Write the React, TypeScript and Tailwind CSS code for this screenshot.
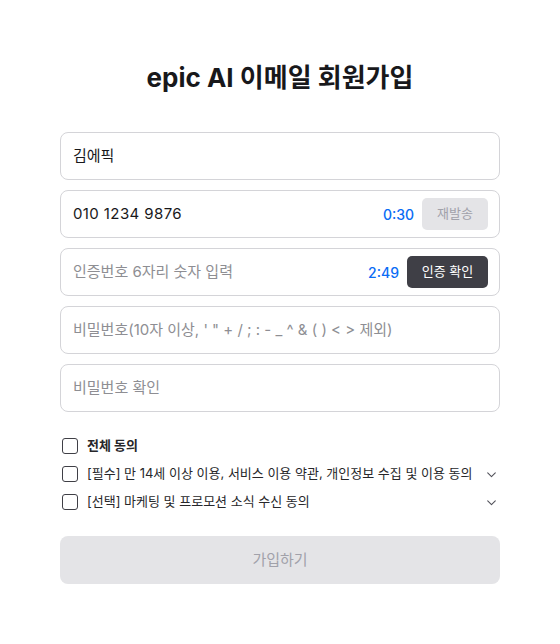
import React, { useState } from 'react';

const font = { fontFamily: 'Inter, "Noto Sans CJK KR", sans-serif' };

const Chevron = () => (
  <svg width="13" height="13" viewBox="0 0 24 24" fill="none" stroke="#52525b" strokeWidth="2" strokeLinecap="round" strokeLinejoin="round">
    <path d="M5 9l7 7 7-7" />
  </svg>
);

interface AgreeRowProps {
  label: string;
  bold?: boolean;
  expandable?: boolean;
}

const AgreeRow: React.FC<AgreeRowProps> = ({ label, bold, expandable }) => {
  const [checked, setChecked] = useState(false);
  return (
    <div className="flex h-7 items-center">
      <button
        type="button"
        onClick={() => setChecked(!checked)}
        className="ml-[2px] h-4 w-4 rounded-[3px] border-[1.5px] border-[#3f3f46] bg-white"
      />
      <span className={`ml-[9px] flex-1 text-[13px] text-[#27272a] ${bold ? 'font-bold' : ''}`}>{label}</span>
      {expandable && (
        <span className="mr-[2px] flex items-center">
          <Chevron />
        </span>
      )}
    </div>
  );
};

export default function App() {
  const [name, setName] = useState('김에픽');
  const [phone, setPhone] = useState('010 1234 9876');
  const [code, setCode] = useState('');
  const [pw, setPw] = useState('');
  const [pw2, setPw2] = useState('');

  const inputBox = 'flex h-12 items-center rounded-lg border border-[#d4d4d8] bg-white pl-3 pr-[11px]';
  const inputCls = 'min-w-0 flex-1 bg-transparent text-[15px] text-[#18181b] outline-none placeholder:text-[#8e8e93]';

  return (
    <div className="min-h-[644px] w-full bg-white" style={font}>
      <div className="mx-auto flex w-[440px] flex-col pt-[59px]">
        <h1 className="text-center text-[26px] font-bold leading-[38px] text-[#18181b]">epic AI 이메일 회원가입</h1>

        <form className="mt-[35px] flex flex-col gap-[10px]" onSubmit={(e) => e.preventDefault()}>
          <div className={inputBox}>
            <input className={inputCls} value={name} onChange={(e) => setName(e.target.value)} />
          </div>
          <div className={inputBox}>
            <input className={`${inputCls} tracking-[0.4px]`} value={phone} onChange={(e) => setPhone(e.target.value)} />
            <span className="mr-2 text-[14px] font-medium text-[#0a6cf5]">0:30</span>
            <button type="button" className="h-8 w-[66px] rounded-[5px] bg-[#e4e4e7] text-[13px] text-[#a1a1aa]">
              재발송
            </button>
          </div>
          <div className={inputBox}>
            <input
              className={inputCls}
              placeholder="인증번호 6자리 숫자 입력"
              value={code}
              onChange={(e) => setCode(e.target.value)}
            />
            <span className="mr-2 text-[14px] font-medium text-[#0a6cf5]">2:49</span>
            <button type="button" className="h-8 w-[81px] rounded-[5px] bg-[#3f3f46] text-[13px] text-white">
              인증 확인
            </button>
          </div>
          <div className={inputBox}>
            <input
              type="password"
              className={inputCls}
              placeholder={`비밀번호(10자 이상, ' " + / ; : - _ ^ & ( ) < > 제외)`}
              value={pw}
              onChange={(e) => setPw(e.target.value)}
            />
          </div>
          <div className={inputBox}>
            <input
              type="password"
              className={inputCls}
              placeholder="비밀번호 확인"
              value={pw2}
              onChange={(e) => setPw2(e.target.value)}
            />
          </div>

          <div className="mt-[10px] flex flex-col">
            <AgreeRow label="전체 동의" bold />
            <AgreeRow label="[필수] 만 14세 이상 이용, 서비스 이용 약관, 개인정보 수집 및 이용 동의" expandable />
            <AgreeRow label="[선택] 마케팅 및 프로모션 소식 수신 동의" expandable />
          </div>

          <button
            type="submit"
            className="mt-[10px] h-12 w-full rounded-lg bg-[#e4e4e7] text-[15px] text-[#a1a1aa]"
          >
            가입하기
          </button>
        </form>
      </div>
    </div>
  );
}
